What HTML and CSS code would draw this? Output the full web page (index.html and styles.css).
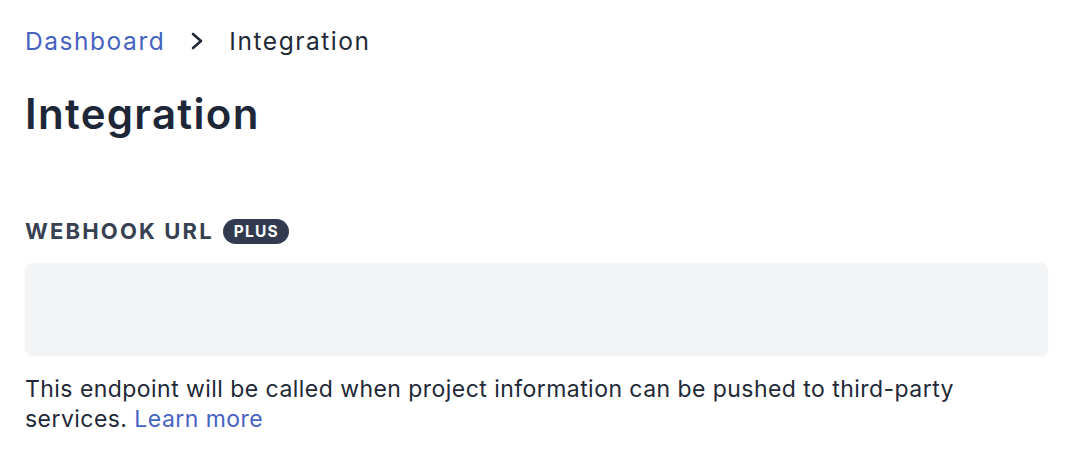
FILE: index.html
```html
<!DOCTYPE html>
<html>
<head>
<meta charset="utf-8">
<link rel="stylesheet" href="styles.css">
</head>
<body>
<main class="page">
  <nav class="crumbs">
    <a class="crumb-link" href="#">Dashboard</a>
    <svg class="chev" viewBox="0 0 16 24" width="16" height="24"><path d="M4 5 L12 12 L4 19" fill="none" stroke="#1f2937" stroke-width="2.6" stroke-linecap="round" stroke-linejoin="round"/></svg>
    <span class="crumb-current">Integration</span>
  </nav>
  <h1 class="title">Integration</h1>
  <div class="field">
    <div class="label-row">
      <span class="label">WEBHOOK URL</span>
      <span class="badge">PLUS</span>
    </div>
    <div class="input"></div>
    <p class="help">This endpoint will be called when project information can be pushed to third-party services. <a class="link" href="#">Learn more</a></p>
  </div>
</main>
</body>
</html>
```

FILE: styles.css
```css
html, body {
  margin: 0;
  padding: 0;
  background: #ffffff;
}
body {
  font-family: Inter, "Noto Sans", sans-serif;
  color: #1f2937;
}
.page {
  padding: 24px 26px 0 25px;
}
.crumbs {
  display: flex;
  align-items: center;
  gap: 24px;
  font-size: 24.5px;
  letter-spacing: 1.55px;
  line-height: 34px;
  height: 34px;
}
.crumb-link {
  color: #4763c2;
  text-decoration: none;
}
.crumb-current {
  color: #1f2937;
}
.chev {
  display: block;
}
.title {
  margin: 28px 0 0;
  font-size: 42px;
  line-height: 56px;
  font-weight: 600;
  color: #1e2737;
  letter-spacing: 1.3px;
}
.field {
  margin-top: 74px;
}
.label-row {
  display: flex;
  align-items: center;
  gap: 9px;
  height: 30px;
}
.label {
  font-size: 22px;
  font-weight: 700;
  letter-spacing: 2.15px;
  color: #374151;
}
.badge {
  background: #323a4f;
  color: #ffffff;
  font-size: 15.5px;
  font-weight: 700;
  letter-spacing: 1.2px;
  padding: 2px 10px 2px 11px;
  border-radius: 13px;
  line-height: 21px;
}
.input {
  margin-top: 17px;
  height: 92px;
  background: #f3f4f6;
  border-radius: 7px;
  box-shadow: 0 1px 2px rgba(0,0,0,0.06);
}
.help {
  margin: 19px 0 0;
  font-size: 23px;
  line-height: 30px;
  letter-spacing: 0.45px;
  color: #1f2937;
  max-width: 960px;
}
.link {
  color: #4763c2;
  text-decoration: none;
}
```
